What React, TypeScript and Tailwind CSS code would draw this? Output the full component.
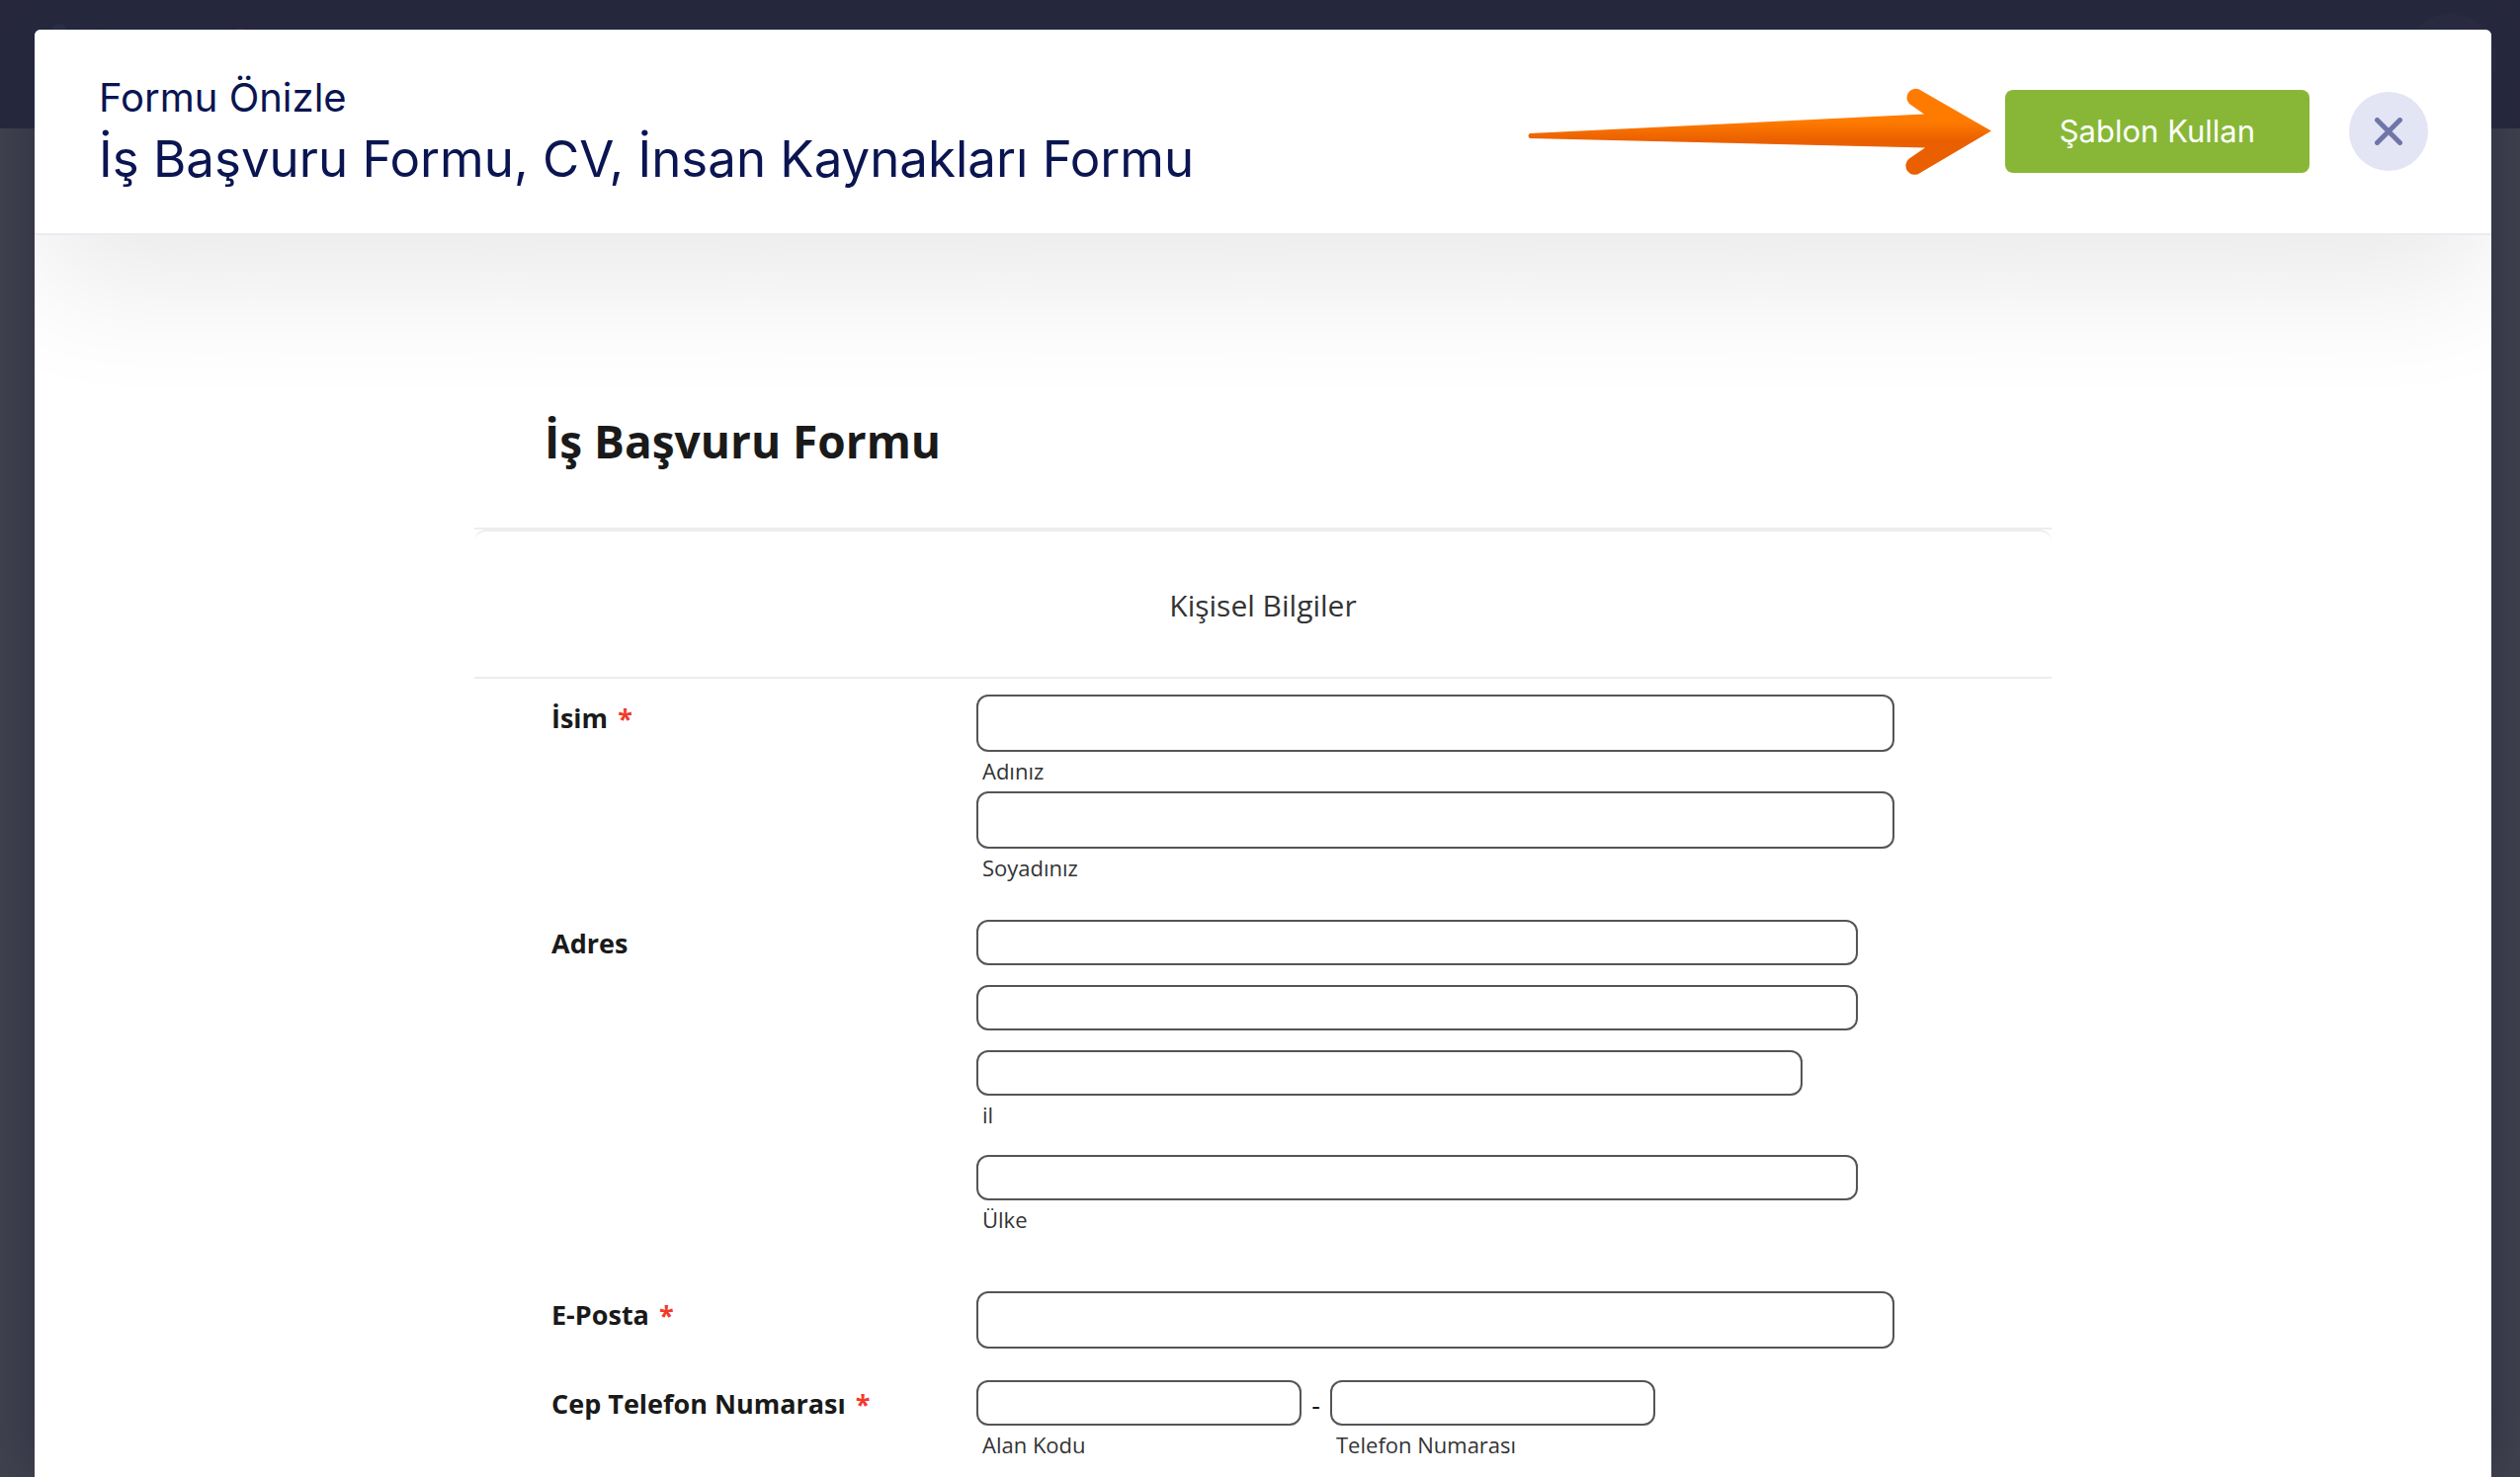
import { useId, type ReactNode } from "react";

const inputBase =
  "block rounded-[12px] border-2 border-[#555555] bg-white px-4 text-[27px] text-[#1a1a1a] outline-none focus:border-[#0a1551]";

type TextFieldProps = {
  label?: string;
  ariaLabel?: string;
  className: string;
  type?: string;
};

function TextField({ label, ariaLabel, className, type = "text" }: TextFieldProps) {
  const id = useId();

  return (
    <div>
      <input id={id} type={type} aria-label={ariaLabel} className={`${inputBase} ${className}`} />
      {label && (
        <label htmlFor={id} className="mt-[4px] block pb-[2px] pl-[6px] text-[22px] leading-[30px] text-[#333333]">
          {label}
        </label>
      )}
    </div>
  );
}

type RowProps = {
  title: string;
  required?: boolean;
  children: ReactNode;
};

function Row({ title, required, children }: RowProps) {
  return (
    <div role="group" aria-label={title} className="flex pl-[78px]">
      <div className="w-[430px] shrink-0 pt-[4px] text-[27px] leading-[40px] font-bold text-[#1a1a1a]">
        {title}
        {required && <span className="ml-[10px] text-[#f23a2b]">*</span>}
      </div>
      <div className="min-w-0 flex-1">{children}</div>
    </div>
  );
}

function Arrow() {
  return (
    <svg viewBox="0 0 470 88" className="h-[88px] w-[470px]" aria-hidden="true">
      <defs>
        <linearGradient id="arrow-fill" x1="0" y1="0" x2="0" y2="1">
          <stop offset="0.38" stopColor="#ff7b00" />
          <stop offset="0.6" stopColor="#ea6000" />
        </linearGradient>
      </defs>
      <path
        fill="url(#arrow-fill)"
        d="M3 46 L402 26.500 L387 16 A9 9 0 0 1 397 1.500 L470 43.500 L398 86 A9 9 0 0 1 387 71.500 L403 60.500 L3 51 Q0 48.500 3 46 Z"
      />
    </svg>
  );
}

function PreviewHeader() {
  return (
    <header className="relative flex items-center justify-between rounded-t-[6px] border-b-2 border-[#ebebf2] bg-white pt-[38px] pr-[64px] pb-[38px] pl-[65px] font-[Inter,sans-serif] shadow-[0_48px_130px_rgba(0,0,0,0.09)]">
      <div className="text-[#0a1551]">
        <p className="text-[40px] leading-[62px]">Formu Önizle</p>
        <h1 className="pb-[6px] text-[51px] leading-[62px]">İş Başvuru Formu, CV, İnsan Kaynakları Formu</h1>
      </div>

      <div className="flex items-center">
        <Arrow />
        <button
          type="button"
          className="ml-[14px] h-[84px] rounded-[8px] bg-[#88b737] px-[55px] text-[31px] text-white hover:bg-[#79a52f]"
        >
          Şablon Kullan
        </button>
        <button
          type="button"
          aria-label="Kapat"
          className="ml-[40px] flex h-[80px] w-[80px] items-center justify-center rounded-full bg-[#e3e5f5] text-[#6f76a7]"
        >
          <svg viewBox="0 0 28 28" className="h-[28px] w-[28px]" aria-hidden="true">
            <path d="M2.500 2.500 L25.500 25.500 M25.500 2.500 L2.500 25.500" stroke="currentColor" strokeWidth="5" strokeLinecap="round" />
          </svg>
        </button>
      </div>
    </header>
  );
}

// Dimmed remains of the page header that peek out above the dialog
function Backdrop() {
  return (
    <div aria-hidden="true">
      <span className="absolute top-[24px] left-[52px] h-[16px] w-[16px] rounded-full bg-[#2c324c]" />
      <span className="absolute top-[28px] left-[236px] h-[16px] w-[14px] rounded-full bg-[#3a2f40]" />
      <span className="absolute top-[14px] right-[24px] h-[94px] w-[94px] rounded-full bg-[#2b2c40]" />
    </div>
  );
}

export default function App() {
  return (
    <div className="relative h-screen overflow-hidden bg-[linear-gradient(#27283d_130px,#42434f_130px)] pt-[30px] pr-[29px] pl-[35px]">
      <Backdrop />
      <div
        role="dialog"
        aria-label="Formu Önizle"
        className="relative h-full rounded-t-[6px] bg-white shadow-[0_0_60px_rgba(37,40,62,0.8)]"
      >
        <div className="h-full overflow-hidden rounded-t-[6px]">
          <PreviewHeader />

          <form className="mx-auto max-w-[1596px] font-['Open_Sans',sans-serif]">
            <h2 className="border-b-2 border-[#ededed] pt-[176px] pb-[56px] pl-[71px] text-[46px] leading-[64px] font-bold text-[#1a1a1a]">
              İş Başvuru Formu
            </h2>
            <h3 className="rounded-t-[12px] border-t-2 border-b-2 border-[#ededed] pt-[55px] pb-[52px] text-center text-[30px] leading-[40px] text-[#333333]">
              Kişisel Bilgiler
            </h3>

            <div className="pt-[16px]">
              <Row title="İsim" required>
                <div className="space-y-[4px]">
                  <TextField label="Adınız" className="h-[58px] w-[929px]" />
                  <TextField label="Soyadınız" className="h-[58px] w-[929px]" />
                </div>
              </Row>

              <div className="mt-[36px]">
                <Row title="Adres">
                  <div className="space-y-[20px]">
                    <TextField ariaLabel="Adres satırı 1" className="h-[46px] w-[892px]" />
                    <TextField ariaLabel="Adres satırı 2" className="h-[46px] w-[892px]" />
                    <TextField label="il" className="h-[46px] w-[836px]" />
                  </div>
                  <div className="mt-[24px]">
                    <TextField label="Ülke" className="h-[46px] w-[892px]" />
                  </div>
                </Row>
              </div>

              <div className="mt-[56px]">
                <Row title="E-Posta" required>
                  <TextField ariaLabel="E-Posta" type="email" className="h-[58px] w-[929px]" />
                </Row>
              </div>

              <div className="mt-[32px]">
                <Row title="Cep Telefon Numarası" required>
                  <div className="flex">
                    <TextField label="Alan Kodu" type="tel" className="h-[46px] w-[329px]" />
                    <span className="w-[29px] pt-[2px] text-center text-[27px] leading-[46px] text-[#1a1a1a]">-</span>
                    <TextField label="Telefon Numarası" type="tel" className="h-[46px] w-[329px]" />
                  </div>
                </Row>
              </div>
            </div>
          </form>
        </div>
      </div>
    </div>
  );
}
